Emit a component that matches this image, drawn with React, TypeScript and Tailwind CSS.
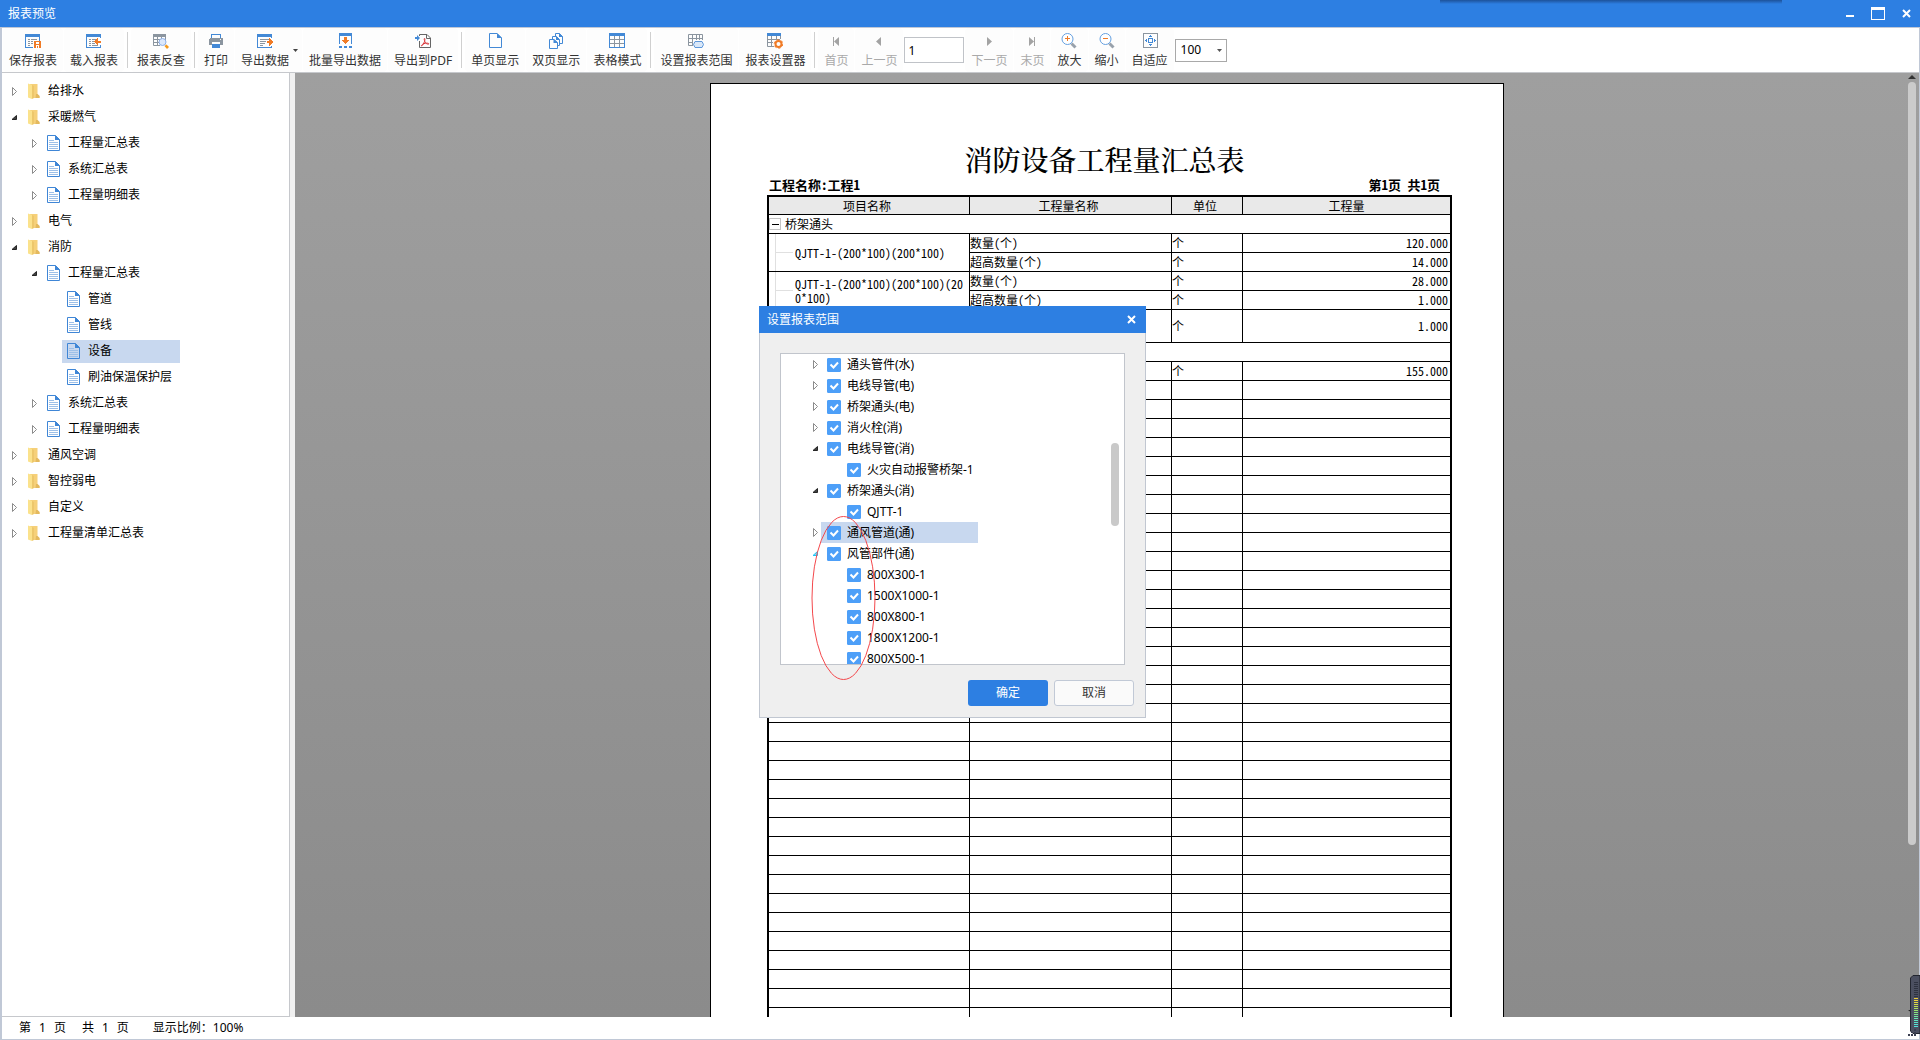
import { useState } from "react"
import type { ReactNode } from "react"

const BLUE = "#4389d6"
const GRAY = "#8b959f"
const ORANGE = "#f07b26"

function Icon({ children, crisp = true }: { children: ReactNode; crisp?: boolean }) {
  return (
    <svg
      width="16"
      height="16"
      viewBox="0 0 16 16"
      fill="none"
      shapeRendering={crisp ? "crispEdges" : "auto"}
      aria-hidden="true"
    >
      {children}
    </svg>
  )
}

function SheetFrame() {
  return (
    <>
      <path d="M0.5 3V14.5H14.5V3" stroke={BLUE} />
      <path d="M0 1H15V4H0Z" fill={BLUE} />
    </>
  )
}

function SaveIcon() {
  return (
    <Icon>
      <SheetFrame />
      <path d="M3 6.5H5M6 6.5H12M3 8.5H5M6 8.5H12M3 10.5H5M6 10.5H8M3 12.5H5" stroke={GRAY} />
      <path d="M8 8H16V16H8Z" fill="#fff" />
      <path d="M9 8H16V15H14V12H11V15H9Z" fill={ORANGE} />
      <path d="M11 9H14V11H11Z" fill="#fff" />
      <path d="M12 13H13V15H12Z" fill={ORANGE} />
    </Icon>
  )
}

function LoadIcon() {
  return (
    <Icon>
      <SheetFrame />
      <path d="M3 6.5H5M6 6.5H12M3 8.5H5M6 8.5H9M3 10.5H5M6 10.5H9M3 12.5H5M6 12.5H12" stroke={GRAY} />
      <path d="M13 5H16V12H13Z" fill="#fff" />
      <path d="M8 8.5L12 5V7.5H15V9.5H12V12Z" fill={ORANGE} />
    </Icon>
  )
}

function LookupIcon() {
  return (
    <Icon crisp={false}>
      <path d="M0 1H13V4H0Z" fill={GRAY} />
      <path d="M0.5 2V12.5H7M4.5 3V12.5M8.5 3V6M12.5 3V6M0 6.5H13M0 9.5H6" stroke={GRAY} />
      <circle cx="9.5" cy="9" r="3.5" fill="#dbe8fb" stroke="#8db0e8" />
      <path d="M11.5 13L13.5 11.5L16 14L14 16Z" fill="#f59a1b" />
    </Icon>
  )
}

function PrintIcon() {
  return (
    <Icon>
      <path d="M3.5 5V1.5H12.5V5" stroke={BLUE} />
      <path d="M2 5H14L15 6V12H12V9H4V12H1V6Z" fill={GRAY} />
      <path d="M12 6H13V7H12Z" fill="#fff" />
      <path d="M4 11H12V15H4Z" fill={BLUE} />
    </Icon>
  )
}

function ExportIcon() {
  return (
    <Icon>
      <SheetFrame />
      <path d="M3 6.5H12M3 8.5H9M3 10.5H8M3 12.5H6" stroke={GRAY} />
      <path d="M13 5H16V13H13Z" fill="#fff" />
      <path d="M10 8H12V5L16 9L12 13V10H10Z" fill={ORANGE} />
    </Icon>
  )
}

function BatchExportIcon() {
  return (
    <Icon>
      <path d="M2 0H15V3H2Z" fill={BLUE} />
      <path d="M2.5 2V11M14.5 2V11" stroke={BLUE} />
      <path d="M2 13H5V15H2ZM7 13H10V15H7ZM12 13H15V15H12Z" fill={BLUE} />
      <path d="M7 4H10V7H12L8.5 11L5 7H7Z" fill={ORANGE} />
    </Icon>
  )
}

function PdfIcon() {
  return (
    <Icon crisp={false}>
      <path d="M4.5 3V1.5H12L15.5 5V14.5H4.5V8" stroke="#666" />
      <path d="M11.5 1.5V5.5H15.5" stroke="#666" />
      <path d="M0 4H2V2L5 5L2 8V6H0Z" fill={BLUE} />
      <path
        d="M9.5 5.5C8.8 5.5 9.4 8 10.4 9.6C11.4 11 13.6 11.6 13.9 10.9C14 10 10.4 9.8 8.4 10.8C6.6 11.8 6 12.8 6.7 12.9C7.6 13 10.6 7.4 9.8 5.6Z"
        stroke="#d9363b"
      />
    </Icon>
  )
}

function SinglePageIcon() {
  return (
    <Icon crisp={false}>
      <path d="M2.5 0.5H10L14.5 5V14.5H2.5Z" stroke={BLUE} />
      <path d="M10 0V5H15Z" fill={BLUE} />
    </Icon>
  )
}

function DoublePageIcon() {
  return (
    <Icon crisp={false}>
      <path d="M7.5 3.5V0.5H11.5L14.5 3.5V10.5H12" stroke={BLUE} />
      <path d="M4.5 6.5V3.5H8.5L11.5 6.5V12.5H9.5" stroke={BLUE} />
      <path d="M1.5 6.5H6L9.5 9.5V15.5H1.5Z" stroke={BLUE} />
      <path d="M11 0V4H15ZM8 3V7H12ZM5.5 6V10H10Z" fill={BLUE} />
    </Icon>
  )
}

function GridIcon() {
  return (
    <Icon>
      <path d="M0.5 6.5H15.5M0.5 10.5H15.5M5.5 3V14M10.5 3V14" stroke={GRAY} />
      <path d="M0.5 2V14.5H15.5V2" stroke={BLUE} />
      <path d="M0 0H16V3H0Z" fill={BLUE} />
    </Icon>
  )
}

function RangeIcon() {
  return (
    <Icon crisp={false}>
      <path d="M0.5 12.5V1.5H14.5V7M0.5 12.5H5M0.5 5.5H14M0.5 9.5H5M4.5 2V12M8.5 2V7M11.5 2V7" stroke={GRAY} />
      <path d="M7 8.5H14L15.5 11.5L14 14.5H7L5.5 11.5Z" fill="#d9e7f8" stroke="#5d97da" />
    </Icon>
  )
}

function SetterIcon() {
  return (
    <Icon crisp={false}>
      <path d="M0.5 3V13.5H7M4.5 3V13M9.5 3V6M0.5 6.5H13M0.5 9.5H6M13.5 3V6" stroke={GRAY} />
      <path d="M0 0H14V3H0Z" fill={BLUE} />
      <circle cx="11.5" cy="11" r="3" stroke={ORANGE} strokeWidth="2" />
      <circle cx="11.5" cy="11" r="4.3" stroke={ORANGE} strokeDasharray="2.2 2.3" />
    </Icon>
  )
}

function ZoomGlassIcon({ plus }: { plus?: boolean }) {
  return (
    <Icon crisp={false}>
      <path d="M10.5 10.5L14.5 14.5" stroke="#98a1ab" strokeWidth="3" />
      <circle cx="6.5" cy="6" r="5.5" fill="#fff" stroke="#65a0e0" />
      <path d={plus ? "M4 5.5H9M6.5 3V8" : "M4 5.5H9"} stroke={ORANGE} />
    </Icon>
  )
}

function FitIcon() {
  return (
    <Icon>
      <path d="M1.5 0.5H15.5V14.5H1.5Z" stroke={GRAY} />
      <path d="M6.5 5.5H10.5V9.5H6.5Z" stroke={BLUE} />
      <path d="M8 2H9V3H10V4H7V3H8ZM8 13H9V12H10V11H7V12H8ZM3 7H4V6H5V9H4V8H3ZM14 7H13V6H12V9H13V8H14Z" fill={BLUE} />
    </Icon>
  )
}

function FirstIcon() {
  return (
    <Icon crisp={false}>
      <path d="M5 4H6V13H5ZM11 4V13L6 8.5Z" fill="#a3a3a3" />
    </Icon>
  )
}

function PrevIcon() {
  return (
    <Icon crisp={false}>
      <path d="M10 4V13L5 8.5Z" fill="#a3a3a3" />
    </Icon>
  )
}

function NextIcon() {
  return (
    <Icon crisp={false}>
      <path d="M6 4V13L11 8.5Z" fill="#a3a3a3" />
    </Icon>
  )
}

function LastIcon() {
  return (
    <Icon crisp={false}>
      <path d="M10 4H11V13H10ZM5 4V13L10 8.5Z" fill="#a3a3a3" />
    </Icon>
  )
}

function FolderIcon() {
  return (
    <Icon crisp={false}>
      <path d="M3 1H10.5V11L12.5 13V15H4Z" fill="#f6d079" />
      <path d="M1 0.5L5 2V16L1 14.5Z" fill="#fbe28c" />
      <path d="M5 2V16L7 15V3Z" fill="#edc76b" />
      <path d="M9 11H10.5L12.5 13V15H8.5Z" fill="#e3b95f" />
    </Icon>
  )
}

function DocIcon() {
  return (
    <Icon crisp={false}>
      <path d="M0.5 0.5H8.5L12.5 4.5V15.5H0.5Z" stroke="#3f86d6" />
      <path d="M8 0V5H13Z" fill="#3f86d6" />
      <path d="M2 5.5H7M2 7.5H11M2 9.5H11M2 11.5H11M2 13.5H11" stroke="#9dc0e8" />
    </Icon>
  )
}

function Caret({ open, active }: { open?: boolean; active?: boolean }) {
  return (
    <svg width="8" height="9" viewBox="0 0 8 9" fill="none" aria-hidden="true">
      {open ? (
        <path
          d="M6.5 2.5V6.5H2Z"
          fill={active ? "#7fdcf8" : "#404040"}
          stroke={active ? "#1cc4f7" : "#262626"}
          strokeLinejoin="round"
        />
      ) : (
        <path d="M2.5 0.5V8.5L6.5 4.5Z" fill="#fff" stroke="#8c8c8c" />
      )}
    </svg>
  )
}

type ToolButtonProps = { icon: ReactNode; label: string; disabled?: boolean; menu?: boolean }

function ToolButton({ icon, label, disabled, menu }: ToolButtonProps) {
  return (
    <button
      disabled={disabled}
      className={`relative flex shrink-0 flex-col items-center gap-0.5 rounded-sm bg-[#fdfdfd] pt-[5px] pl-1.5 ${
        menu ? "pr-[13px]" : "pr-1.5"
      } ${disabled ? "text-[#a9a9a9]" : "text-[#333]"}`}
    >
      {icon}
      <span className="leading-5 whitespace-nowrap">{label}</span>
      {menu && (
        <svg width="5" height="3" viewBox="0 0 5 3" className="absolute top-[21px] right-1" aria-hidden="true">
          <path d="M0 0H5L2.5 3Z" fill="#444" />
        </svg>
      )}
    </button>
  )
}

function Divider() {
  return <div className="mx-0.5 my-1 w-px shrink-0 bg-[#d0d0d0]" />
}

type TreeItem = { name: string; open?: boolean; leaf?: boolean; children?: TreeItem[] }

const summaryReports = (open?: boolean): TreeItem[] => [
  {
    name: "工程量汇总表",
    open,
    children: open
      ? [
          { name: "管道", leaf: true },
          { name: "管线", leaf: true },
          { name: "设备", leaf: true },
          { name: "刷油保温保护层", leaf: true },
        ]
      : undefined,
  },
  { name: "系统汇总表" },
  { name: "工程量明细表" },
]

const reportTree: TreeItem[] = [
  { name: "给排水" },
  { name: "采暖燃气", open: true, children: summaryReports() },
  { name: "电气" },
  { name: "消防", open: true, children: summaryReports(true) },
  { name: "通风空调" },
  { name: "智控弱电" },
  { name: "自定义" },
  { name: "工程量清单汇总表" },
]

function ReportTree({ items, depth = 0, selected, onSelect }: {
  items: TreeItem[]
  depth?: number
  selected: string
  onSelect: (name: string) => void
}) {
  return (
    <ul className={depth === 0 ? "pl-2" : "w-fit pl-5"}>
      {items.map((item) => (
        <li key={item.name}>
          <div className="flex h-[26px] items-center">
            <span className="flex w-3 shrink-0">{!item.leaf && <Caret open={item.open} />}</span>
            <button
              onClick={() => onSelect(item.name)}
              className={`flex h-[23px] items-center gap-[5px] pr-2 pl-[5px] whitespace-nowrap ${
                item.leaf ? "grow" : ""
              } ${selected === item.name ? "bg-[#c8d8ef]" : ""}`}
            >
              {depth === 0 ? <FolderIcon /> : <DocIcon />}
              {item.name}
            </button>
          </div>
          {item.open && item.children && (
            <ReportTree items={item.children} depth={depth + 1} selected={selected} onSelect={onSelect} />
          )}
        </li>
      ))}
    </ul>
  )
}

const rangeTree: TreeItem[] = [
  { name: "通头管件(水)" },
  { name: "电线导管(电)" },
  { name: "桥架通头(电)" },
  { name: "消火栓(消)" },
  { name: "电线导管(消)", open: true, children: [{ name: "火灾自动报警桥架-1" }] },
  { name: "桥架通头(消)", open: true, children: [{ name: "QJTT-1" }] },
  { name: "通风管道(通)" },
  {
    name: "风管部件(通)",
    open: true,
    children: [
      { name: "800X300-1" },
      { name: "1500X1000-1" },
      { name: "800X800-1" },
      { name: "1800X1200-1" },
      { name: "800X500-1" },
    ],
  },
]

function CheckItem({ name, highlighted }: { name: string; highlighted?: boolean }) {
  return (
    <label
      className={`flex h-[21px] min-w-[157px] items-center gap-1.5 pl-1.5 whitespace-nowrap ${
        highlighted ? "bg-[#c8d8ef]" : ""
      }`}
    >
      <span className="grid">
        <input
          type="checkbox"
          defaultChecked
          className="peer col-start-1 row-start-1 size-3.5 appearance-none rounded-[1px] border border-[#4d9ff8] bg-white checked:bg-[#4d9ff8]"
        />
        <svg
          width="14"
          height="14"
          viewBox="0 0 14 14"
          fill="none"
          className="pointer-events-none invisible col-start-1 row-start-1 peer-checked:visible"
          aria-hidden="true"
        >
          <path d="M3.5 6.5L6.5 9.5L11 4.5" stroke="#fff" strokeWidth="2" />
        </svg>
      </span>
      {name}
    </label>
  )
}

function RangeDialog({ onClose }: { onClose: () => void }) {
  return (
    <section
      role="dialog"
      aria-labelledby="range-title"
      className="absolute top-[306px] left-[759px] w-[387px] bg-[#efefef]"
    >
      <header className="flex h-[27px] items-center justify-between bg-[#2d7fe2] pr-2.5 pl-2 text-white">
        <h2 id="range-title">设置报表范围</h2>
        <button aria-label="关闭" onClick={onClose}>
          <CloseGlyph />
        </button>
      </header>
      {/* inline border keeps the frame continuous below the title */}
      <div className="border border-t-0 border-[#c1c7d1] pt-5 pb-[11px]">
        <div className="relative mx-5 h-[312px] overflow-hidden border border-[#c1c5cc] bg-white">
          <ul className="w-fit pl-[30px]">
            {rangeTree.map((item) => (
              <li key={item.name}>
                <div className="flex items-center">
                  <span className="flex w-2.5">
                    <Caret open={item.open} active={item.name === "风管部件(通)"} />
                  </span>
                  <CheckItem name={item.name} highlighted={item.name === "通风管道(通)"} />
                </div>
                {item.children && (
                  <ul className="pl-[30px]">
                    {item.children.map((child) => (
                      <li key={child.name}>
                        <CheckItem name={child.name} />
                      </li>
                    ))}
                  </ul>
                )}
              </li>
            ))}
          </ul>
          <div className="absolute top-[89px] right-[5px] h-[83px] w-2 rounded-full bg-[#c9c9c9]" />
        </div>
        <footer className="mt-[15px] flex justify-end gap-1.5 pr-[11px]">
          <button className="h-[26px] w-20 rounded-[3px] bg-[#2d7fe2] text-white" onClick={onClose}>
            确定
          </button>
          <button
            className="h-[26px] w-20 rounded-[3px] border border-[#c1c9d6] bg-[#fafafa] text-[#333]"
            onClick={onClose}
          >
            取消
          </button>
        </footer>
      </div>
      {/* Markup ellipse */}
      <svg
        width="66"
        height="166"
        viewBox="0 0 66 166"
        fill="none"
        className="pointer-events-none absolute top-[209px] left-[52px]"
        aria-hidden="true"
      >
        <ellipse cx="32.5" cy="83" rx="31.5" ry="81.5" stroke="#f4484c" />
      </svg>
    </section>
  )
}

function CloseGlyph() {
  return (
    <svg width="9" height="9" viewBox="0 0 9 9" fill="none" aria-hidden="true">
      <path d="M1 1L8 8M8 1L1 8" stroke="#fff" strokeWidth="2" />
    </svg>
  )
}

const headCell = "border-r border-b border-black p-0 pr-1 font-normal"
const cell = "border-r border-b border-black p-0 text-left font-normal"
const lastCell = "border-b border-black p-0 pr-0.5 text-right font-normal"
const EMPTY_ROWS = 38

function BranchCell({ children }: { children: ReactNode }) {
  return (
    <td rowSpan={2} className="border-r border-b border-black p-0">
      <div className="flex h-[37px] items-center">
        <span className="w-[7px] shrink-0 self-stretch border-r border-[#e0e0e0]" />
        <span className="h-px w-[17px] shrink-0 bg-[#e0e0e0]" />
        <span className="pr-1 pl-0.5 leading-[14px] break-all">{children}</span>
      </div>
    </td>
  )
}

function ReportTable() {
  return (
    <table className="w-full table-fixed border-separate border-spacing-0 border-2 border-black leading-4">
      <colgroup>
        <col className="w-[201px]" />
        <col className="w-[202px]" />
        <col className="w-[71px]" />
        <col />
      </colgroup>
      <thead>
        <tr className="h-[18px] bg-[#e9e9e9]">
          <th className={headCell}>项目名称</th>
          <th className={headCell}>工程量名称</th>
          <th className={headCell}>单位</th>
          <th className="border-b border-black p-0 font-normal">工程量</th>
        </tr>
      </thead>
      <tbody>
        <tr className="h-[19px]">
          <td colSpan={4} className="border-b border-black p-0">
            <div className="flex items-center gap-1">
              <button aria-label="折叠" className="grid size-3 place-items-center border border-[#c4c4c4]">
                <span className="h-px w-[7px] bg-black" />
              </button>
              桥架通头
            </div>
          </td>
        </tr>
        <tr className="h-[19px]">
          <BranchCell>QJTT-1-(200*100)(200*100)</BranchCell>
          <td className={cell}>数量(个)</td>
          <td className={cell}>个</td>
          <td className={lastCell}>120.000</td>
        </tr>
        <tr className="h-[19px]">
          <td className={cell}>超高数量(个)</td>
          <td className={cell}>个</td>
          <td className={lastCell}>14.000</td>
        </tr>
        <tr className="h-[19px]">
          <BranchCell>QJTT-1-(200*100)(200*100)(200*100)</BranchCell>
          <td className={cell}>数量(个)</td>
          <td className={cell}>个</td>
          <td className={lastCell}>28.000</td>
        </tr>
        <tr className="h-[19px]">
          <td className={cell}>超高数量(个)</td>
          <td className={cell}>个</td>
          <td className={lastCell}>1.000</td>
        </tr>
        <tr className="h-[33px]">
          <td className={cell} />
          <td className={cell} />
          <td className={cell}>个</td>
          <td className={lastCell}>1.000</td>
        </tr>
        <tr className="h-[19px]">
          <td colSpan={4} className="border-b border-black p-0" />
        </tr>
        <tr className="h-[19px]">
          <td className={cell} />
          <td className={cell} />
          <td className={cell}>个</td>
          <td className={lastCell}>155.000</td>
        </tr>
        {Array.from({ length: EMPTY_ROWS }, (_, i) => (
          <tr key={i} className="h-[19px]">
            <td className={cell} />
            <td className={cell} />
            <td className={cell} />
            <td className={lastCell} />
          </tr>
        ))}
      </tbody>
    </table>
  )
}

const meterColors = [
  "#2e3240", "#2e3240", "#2e3240", "#2e3240", "#2e3240", "#2e3240", "#2e3240", "#2e3240",
  "#f2cf36", "#efd63a", "#e4da40", "#d3de48", "#bfe052", "#aae25e", "#98e46c", "#88e57c",
  "#7be68e", "#70e6a0", "#66e6b0", "#5ee5be", "#58e4ca", "#54e3d4", "#52e2da",
]

function LevelMeter() {
  return (
    <svg width="12" height="62" viewBox="0 0 12 62" className="absolute right-0 bottom-[3px]" aria-hidden="true">
      <path d="M0 35H4V38Z" fill="#222" />
      <path d="M12 0.5H5L2.5 3V56L5 58.5H12Z" fill="#4b4f60" stroke="#22252f" />
      {meterColors.map((color, i) => (
        <rect key={i} x="6" y={7 + i * 2} width="4" height="1" fill={color} />
      ))}
      <path d="M6 54H8V56H6ZM6 57H8V61H6ZM3 57H5V58H3ZM3 59H5V61H3ZM0 59H2V61H0Z" fill="#3a3e50" />
    </svg>
  )
}

export default function App() {
  const [selected, setSelected] = useState("设备")
  const [dialogOpen, setDialogOpen] = useState(true)

  return (
    <div className="relative flex h-screen flex-col overflow-hidden bg-white font-['Noto_Sans','Noto_Sans_CJK_SC',sans-serif] text-xs text-black">
      {/* Title bar */}
      <header className="relative flex h-[27px] shrink-0 items-center justify-between bg-[#2d7fe2] pr-[9px] pl-2 text-white">
        <h1>报表预览</h1>
        <div className="flex items-center gap-[17px]">
          <button aria-label="最小化">
            <svg width="8" height="14" viewBox="0 0 8 14" aria-hidden="true">
              <path d="M0 8H8V10H0Z" fill="#fff" />
            </svg>
          </button>
          <button aria-label="最大化">
            <svg width="14" height="13" viewBox="0 0 14 13" aria-hidden="true">
              <path d="M0 0H14V13H0ZM1 3V12H13V3Z" fill="#fff" fillRule="evenodd" />
            </svg>
          </button>
          <button aria-label="关闭">
            <CloseGlyph />
          </button>
        </div>
        <div className="absolute top-0 right-[138px] h-1 w-[342px] bg-linear-to-b from-[#1d529a] to-[#2d7fe2]" />
      </header>

      <div className="flex min-h-0 grow flex-col border border-l-2 border-[#c0c8d6]">
        {/* Toolbar */}
        <div className="flex h-[45px] shrink-0 gap-px border-b border-[#c6c8cc] pl-px">
          <ToolButton icon={<SaveIcon />} label="保存报表" />
          <ToolButton icon={<LoadIcon />} label="载入报表" />
          <Divider />
          <ToolButton icon={<LookupIcon />} label="报表反查" />
          <Divider />
          <ToolButton icon={<PrintIcon />} label="打印" />
          <ToolButton icon={<ExportIcon />} label="导出数据" menu />
          <ToolButton icon={<BatchExportIcon />} label="批量导出数据" />
          <ToolButton icon={<PdfIcon />} label="导出到PDF" />
          <Divider />
          <ToolButton icon={<SinglePageIcon />} label="单页显示" />
          <ToolButton icon={<DoublePageIcon />} label="双页显示" />
          <ToolButton icon={<GridIcon />} label="表格模式" />
          <Divider />
          <ToolButton icon={<RangeIcon />} label="设置报表范围" />
          <ToolButton icon={<SetterIcon />} label="报表设置器" />
          <Divider />
          <ToolButton icon={<FirstIcon />} label="首页" disabled />
          <ToolButton icon={<PrevIcon />} label="上一页" disabled />
          <input
            aria-label="页码"
            defaultValue="1"
            className="h-[26px] w-[60px] self-center border border-[#c0c3c8] px-[3px]"
          />
          <ToolButton icon={<NextIcon />} label="下一页" disabled />
          <ToolButton icon={<LastIcon />} label="末页" disabled />
          <ToolButton icon={<ZoomGlassIcon plus />} label="放大" />
          <ToolButton icon={<ZoomGlassIcon />} label="缩小" />
          <ToolButton icon={<FitIcon />} label="自适应" />
          <div className="relative self-center">
            <select
              aria-label="显示比例"
              defaultValue="100"
              className="block h-[23px] w-[52px] appearance-none border border-[#a9a9a9] bg-white pl-[5px]"
            >
              <option>50</option>
              <option>100</option>
              <option>200</option>
            </select>
            <svg
              width="5"
              height="3"
              viewBox="0 0 5 3"
              className="pointer-events-none absolute top-2.5 right-[5px]"
              aria-hidden="true"
            >
              <path d="M0 0H5L2.5 3Z" fill="#555" />
            </svg>
          </div>
        </div>

        <div className="flex min-h-0 grow">
          {/* Report tree */}
          <nav className="w-[288px] shrink-0 border-r border-b border-[#c6c8cc] pt-[5px]">
            <ReportTree items={reportTree} selected={selected} onSelect={setSelected} />
          </nav>
          <div className="w-[5px] shrink-0 bg-[#f0f0f0]" />

          {/* Preview */}
          <main className="relative flex grow items-start justify-center overflow-hidden bg-linear-to-b from-[#9f9f9f] to-[#8b8b8b] pt-2.5">
            <article className="min-h-[1123px] w-[794px] shrink-0 border border-black bg-white pt-[59px] pr-[51px] pl-14 font-['Noto_Sans_Mono_CJK_SC','Liberation_Mono','Noto_Sans_CJK_SC',monospace]">
              <h2 className="pr-2.5 text-center font-['Noto_Serif_CJK_SC','Liberation_Serif','Noto_Sans_CJK_SC',serif] text-[28px] leading-8 font-medium">
                消防设备工程量汇总表
              </h2>
              <div className="flex justify-between pr-3 pl-0.5 text-[13px] leading-5 font-bold">
                <span>工程名称:工程1</span>
                <span>第1页 共1页</span>
              </div>
              <ReportTable />
            </article>
            <div className="absolute inset-y-0 right-[3px] flex w-2 flex-col items-center gap-[3px] pt-0.5">
              <svg width="8" height="4" viewBox="0 0 8 4" aria-hidden="true">
                <path d="M0 4L4 0L8 4Z" fill="#333" />
              </svg>
              <div className="h-[81%] w-2 rounded-full bg-[#cbcbcb]" />
            </div>
          </main>
        </div>

        {/* Status bar */}
        <footer className="flex h-[22px] shrink-0 items-center gap-4 pl-[17px]">
          <p className="flex gap-2">
            <span>第</span>
            <span>1</span>
            <span>页</span>
          </p>
          <p className="flex gap-2">
            <span>共</span>
            <span>1</span>
            <span>页</span>
          </p>
          <p className="pl-2">显示比例：100%</p>
        </footer>
      </div>

      {dialogOpen && <RangeDialog onClose={() => setDialogOpen(false)} />}
      <LevelMeter />
    </div>
  )
}
